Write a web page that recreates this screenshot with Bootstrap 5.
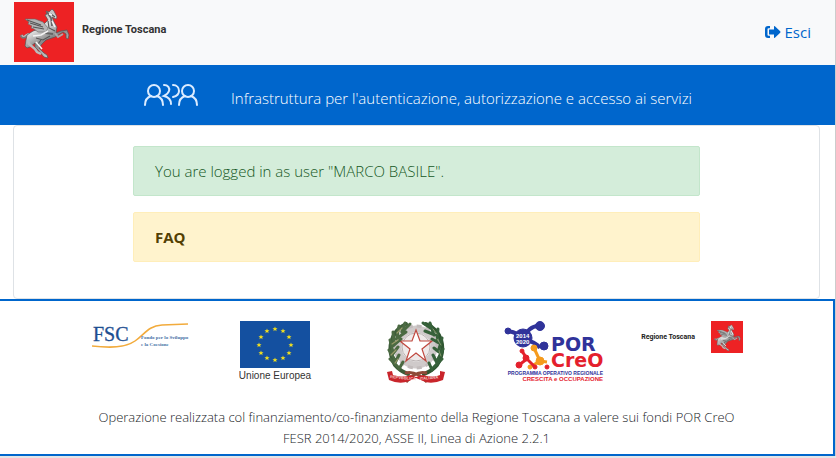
<!DOCTYPE html>
<html lang="it">
<head>
<meta charset="utf-8">
<meta name="viewport" content="width=device-width, initial-scale=1">
<title>ARPA - Regione Toscana</title>
<link href="https://cdn.jsdelivr.net/npm/bootstrap@5.3.0/dist/css/bootstrap.min.css" rel="stylesheet">
<style>
  body { font-family: "Open Sans", "Noto Sans", sans-serif; font-weight: 300; background: #e4e5e7; color: #212529; }
  .page { border-right: 1px solid #ccc; }
  .top-bar { background: #f8f9fa; min-height: 65px; padding: 2px 24px 3px 14px; }
  .brand-name { font: 700 11px/16px Roboto, sans-serif; color: #333; }
  .exit { color: #06c; font-size: 15px; font-weight: 400; }
  .title-bar { background: #06c; min-height: 60px; padding: 0 24px 0 144px; gap: 33px; }
  .title-bar h1 { font-size: 15px; line-height: 24px; font-weight: 300; margin: 6px 0 0; }
  .panel { margin: 0 15px 0 13px; border: 1px solid #dee2e6; border-radius: 4px; padding: 20px 20px 36px; }
  .notices { max-width: 567px; gap: 16px; }
  .notice { padding: 12px 21px; border-radius: 2px; font-size: 15px; line-height: 24px; }
  .notice-ok { background: #d4edda; border-color: #c3e6cb; color: #155724; }
  .notice-faq { background: #fff3cd; border-color: #ffeeba; }
  .notice-faq a { color: #533f03; font-weight: 700; }
  .credits { border: 2px solid #06c; border-left: 0; padding: 20px 72px 5px; margin-bottom: 2px; }
  .credits p { font-size: 13px; line-height: 21px; }
  .logos { min-height: 86px; }
  .small-brand { font: 700 7px/10px Roboto, sans-serif; color: #222; white-space: nowrap; }
  svg { display: block; flex: none; }
</style>
<script src="https://cdn.jsdelivr.net/npm/bootstrap@5.3.0/dist/js/bootstrap.bundle.min.js"></script>
</head>
<body>
<div class="page bg-white">
  <header class="top-bar d-flex align-items-center justify-content-between">
    <div class="d-flex align-items-center gap-2">
      <svg width="60" height="60" viewBox="0 0 60 60" aria-hidden="true">
        <defs>
          <linearGradient id="silver" x1="0" y1="0" x2="0.5" y2="1"><stop offset="0" stop-color="#999"/><stop offset=".45" stop-color="#ddd"/><stop offset=".7" stop-color="#888"/><stop offset="1" stop-color="#ccc"/></linearGradient>
          <g id="pegasus">
            <rect width="60" height="60" fill="#ed2224"/>
            <path d="M20 36q-4-5-8-2q-3 3-5-1" fill="none" stroke="#777" stroke-width="3"/>
            <path d="M20 35q-4-5-8-2q-3 3-4 0" fill="none" stroke="#bbb" stroke-width="1.200"/>
            <path d="M34 18l-3-5 2-1-1-3 3 1 3-3 2 2 3 6-1 2-4-2 2 5 3 5-1 6 5-2 6-1 2 5-1 4-2-1 0-4-3-2-8 5-9 3-4 4-3 4 5 5 3 2 1 3-4-1-6-7-3-3 0-4-5 4-3 1-2-2 1-6 1-5 6-4 6-2z" fill="url(#silver)" stroke="#555" stroke-width=".7"/>
            <path d="M41 31l3 4 5-3" fill="none" stroke="#aaa" stroke-width="2"/>
            <path d="M14 38l1 4 6 5 2 3 4 2" fill="none" stroke="#bbb" stroke-width="2.500"/>
            <path d="M11 17l10 0 8 3 5 6-2 4-8 0-4-3-3-1 1-2-4-2 1-2z" fill="#b5b5b5" stroke="#666" stroke-width=".6"/>
            <path d="M13 18l14 5M16 21l13 4M19 25l11 2M34 19l1 7 6 3M22 36l7 2 7-4M24 42l3-4M37 12l4 3" fill="none" stroke="#555" stroke-width="1.100"/>
            <path d="M33 10l4 6 1 8M31 31l8 1" fill="none" stroke="#666" stroke-width="1.800"/>
            <path d="M19 34l8-1 7-4M22 40l6 7M38 19l3 6M35 12l3 1" fill="none" stroke="#f4f4f4" stroke-width="1.500"/>
          </g>
        </defs>
        <use href="#pegasus"/>
      </svg>
      <span class="brand-name pb-1">Regione Toscana</span>
    </div>
    <a class="exit d-flex align-items-center gap-1 text-decoration-none" href="#">
      <svg width="17" height="16" viewBox="0 0 17 16" fill="#06c" aria-hidden="true">
        <path d="M6 2H4a3 3 0 0 0-3 3v6a3 3 0 0 0 3 3h2v-2.200H4.500a1 1 0 0 1-1-1V5.200a1 1 0 0 1 1-1H6z"/>
        <path d="M5 5.500h5V2.600q0-1 .9-.3l5.300 5q.6.700 0 1.400l-5.300 5q-.9.600-.9-.4v-2.800H5z"/>
      </svg>
      <span>Esci</span>
    </a>
  </header>

  <div class="title-bar d-flex align-items-center text-white">
    <svg width="54" height="24" viewBox="0 0 54 24" fill="none" stroke="#dcecff" stroke-width="2" stroke-linecap="round" aria-hidden="true">
      <circle cx="10" cy="8" r="6"/><path d="M1 22c0-5 3-8 6-9M13 13c3 1 6 4 6 9"/>
      <path d="M20 2c4 0 6 3 5 6c-1 3-3 4-5 5c4 1 7 4 7 8"/>
      <path d="M29 2c4 0 6 3 6 6s-2 5-6 6"/>
      <circle cx="44" cy="8" r="6"/><path d="M35 22c0-5 3-8 6-9M47 13c3 1 6 4 6 9"/>
    </svg>
    <h1>Infrastruttura per l'autenticazione, autorizzazione e accesso ai servizi</h1>
  </div>

  <main class="panel">
    <div class="notices mx-auto d-flex flex-column">
      <div class="alert notice notice-ok mb-0" role="status">You are logged in as user "MARCO BASILE".</div>
      <div class="alert notice notice-faq mb-0"><a href="#" class="text-decoration-none">FAQ</a></div>
    </div>
  </main>

  <footer class="credits text-center">
    <div class="logos row row-cols-5 g-0">
      <div class="col d-flex justify-content-center align-items-start">
        <svg width="98" height="30" viewBox="0 0 98 30" role="img" aria-label="Fondo per lo Sviluppo e la Coesione">
          <path d="M0 25C18 27 33 27 43 20S56 5 70 4L96 3" fill="none" stroke="#f2ab3c" stroke-width="1.500"/>
          <g fill="#1d4f91" font-family="Liberation Serif, serif"><text x="1" y="20" font-size="20" stroke="#1d4f91" stroke-width=".3">FSC</text>
          <g font-size="5" font-weight="700" fill="#4570a5"><text x="49" y="18">Fondo per lo Sviluppo</text><text x="49" y="25">e la Coesione</text></g></g>
        </svg>
      </div>
      <div class="col d-flex justify-content-center align-items-start">
        <svg width="80" height="62" viewBox="0 0 80 62" role="img" aria-label="Unione Europea">
          <defs><path id="star" d="M0-2.600L.7-.8 2.500-.8 1.100.4 1.600 2.200 0 1.100-1.600 2.200-1.100.4-2.500-.8-.7-.8z"/></defs>
          <rect x="1" width="70" height="47" fill="#1450a0"/>
          <g fill="#f5e11c">
            <use href="#star" x="36" y="8"/><use href="#star" x="44" y="10"/><use href="#star" x="50" y="16"/><use href="#star" x="52" y="24"/><use href="#star" x="50" y="32"/><use href="#star" x="44" y="37"/><use href="#star" x="36" y="39"/><use href="#star" x="28" y="37"/><use href="#star" x="22" y="32"/><use href="#star" x="20" y="24"/><use href="#star" x="22" y="16"/><use href="#star" x="28" y="10"/>
          </g>
          <text x="36" y="58" text-anchor="middle" font-family="Liberation Sans, sans-serif" font-size="10" font-weight="400" fill="#333">Unione Europea</text>
        </svg>
      </div>
      <div class="col d-flex justify-content-center align-items-start">
        <svg width="58" height="65" viewBox="0 0 58 65" role="img" aria-label="Repubblica Italiana">
          <circle cx="29" cy="26" r="18" fill="none" stroke="#cfcaca" stroke-width="7"/>
          <circle cx="29" cy="26" r="21" fill="none" stroke="#c2bcbc" stroke-width="3" stroke-dasharray="5 4"/>
          <circle cx="29" cy="26" r="14" fill="#eee9e9" stroke="#b9b2b2"/>
          <path d="M29 9l4 11h12L35 28l4 12-10-8-10 8 4-12-10-8h12z" fill="#fff" stroke="#c0483f" stroke-width="1.200"/>
          <g fill="none" stroke-linecap="round">
            <path d="M19 3C4 10-1 28 8 44q5 6 13 9" stroke="#3c5c38" stroke-width="4"/>
            <path d="M18 2l-3 8M23 3l-8 8M12 5l-2 11M19 11L9 18M6 11l1 12M14 18L5 26M3 19l3 12M11 26L5 34M2 29l6 10M12 34l-4 8M3 38l8 8M16 41l-4 7" stroke="#4b6a42" stroke-width="3"/>
            <path d="M10 12l5-5M5 23l6-4M4 34l5-5M8 42l3-4" stroke="#9a9b69" stroke-width="1.200"/>
            <path d="M39 3C55 9 60 28 50 44q-5 6-13 9" stroke="#2f5631" stroke-width="4"/>
            <path d="M36 2l9 6M43 2l4 12M38 10l10 4M51 8l-1 13M45 18l7 4M55 17l-3 11M47 27l5 4M56 28l-5 10M46 34l4 8M55 38l-8 8M42 42l3 7" stroke="#36613a" stroke-width="3"/>
            <path d="M46 8l4 5M50 18l4 6M52 30l2 5" stroke="#84976b"/>
          </g>
          <path d="M18 52q11-3 22 9M40 52q-11-3-21 9" fill="none" stroke="#8e4937" stroke-width="3"/>
          <path d="M0 51l5-1 1 4q11 3 17 0l6 2 7-2q10 3 17 0l0-4 5 1-2 8q-12 5-20 1l-7-3-7 3q-9 4-20-1z" fill="#c9252b"/>
          <g font-family="Liberation Sans, sans-serif" font-size="4" font-weight="700" fill="#f3cbc6"><text x="3" y="57" transform="rotate(5 3 57)">REPVBBLICA</text><text x="33" y="59" transform="rotate(-5 33 59)">ITALIANA</text></g>
        </svg>
      </div>
      <div class="col d-flex justify-content-center align-items-start">
        <svg width="100" height="62" viewBox="0 0 100 62" role="img" aria-label="POR CreO 2014 2020">
          <g stroke="#30339a" fill="#30339a"><path d="M4 10Q15 12 19 18M19 18Q25 5 34 5" fill="none" stroke-width="4"/><path d="M19 18Q32 21 36 27" fill="none" stroke-width="4"/><circle cx="4" cy="10" r="3"/><circle cx="19" cy="17" r="9"/><circle cx="36" cy="5" r="4.500"/><circle cx="40" cy="25" r="4"/></g>
          <g stroke="#f59b1d" fill="#f59b1d"><path d="M30 27l6 13-10 6M36 40l7 1" fill="none" stroke-width="3"/><circle cx="30" cy="27" r="3"/><circle cx="36" cy="40" r="4"/><circle cx="26" cy="46" r="2"/></g>
          <g stroke="#e4202c" fill="#e4202c"><path d="M18 30l5 8-8 6M23 38l8 8" fill="none" stroke-width="3"/><circle cx="18" cy="30" r="2"/><circle cx="22" cy="37" r="3"/><circle cx="15" cy="44" r="3"/><circle cx="31" cy="46" r="2"/><circle cx="43" cy="46" r="2"/></g>
          <g font-family="Liberation Sans, sans-serif" font-weight="700">
            <g fill="#fff" font-size="6"><text x="12" y="17">2014</text><text x="12" y="23">2020</text></g>
            <g font-family="DejaVu Sans, sans-serif" font-size="19"><text x="47" y="30" fill="#30339a">POR</text><text x="47" y="46" fill="#e4202c">CreO</text></g>
            <text x="99" y="54" text-anchor="end" font-size="5" fill="#30339a">PROGRAMMA OPERATIVO REGIONALE</text>
            <text x="99" y="60" text-anchor="end" font-size="6" fill="#e4202c">CRESCITA e OCCUPAZIONE</text>
          </g>
        </svg>
      </div>
      <div class="col d-flex justify-content-center align-items-start">
        <div class="d-flex align-items-center gap-3">
          <span class="small-brand">Regione Toscana</span>
          <svg width="32" height="32" viewBox="0 0 60 60" aria-hidden="true"><use href="#pegasus"/></svg>
        </div>
      </div>
    </div>
    <p class="mb-0 px-4">Operazione realizzata col finanziamento/co-finanziamento della Regione Toscana a valere sui fondi POR CreO FESR 2014/2020, ASSE II, Linea di Azione 2.2.1</p>
  </footer>
</div>
</body>
</html>
